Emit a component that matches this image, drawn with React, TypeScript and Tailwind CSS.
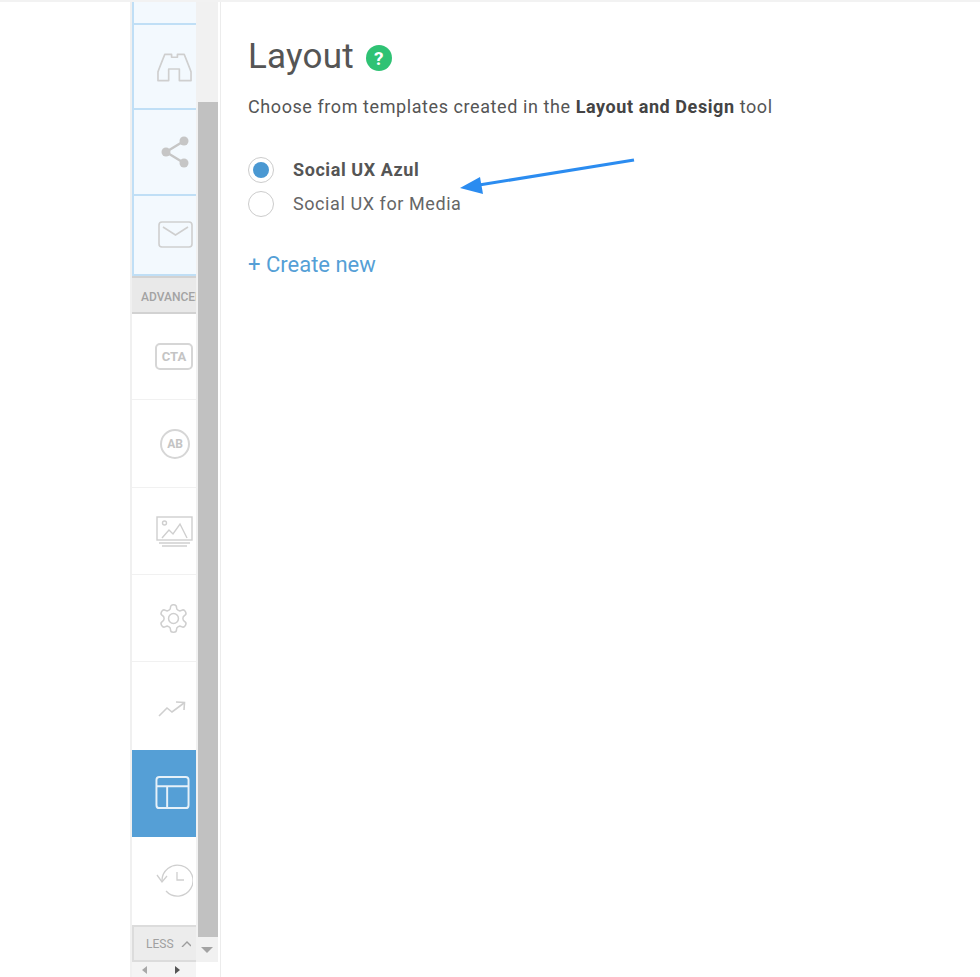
const iconCls = 'block fill-none stroke-[#cfcfcf]';

const Binoculars = () => (
  <svg width="35" height="31" viewBox="0 0 36 31" className={iconCls} strokeWidth="1.7" strokeLinejoin="round">
    <path d="M1 29 L1 20 Q2 17 8 2 L15 2 L15 5 L21 5 L21 2 L28 2 Q34 17 35 20 L35 29 L23 29 L23 17 L12 17 L12 29 Z" />
  </svg>
);

const Share = () => (
  <svg width="28" height="32" viewBox="0 0 28 32">
    <path d="M5 16 L23 5 M5 16 L23 27" stroke="#c6c6c6" strokeWidth="2.5" />
    <circle cx="5" cy="16" r="4.5" fill="#c6c6c6" />
    <circle cx="23" cy="5" r="4.5" fill="#c6c6c6" />
    <circle cx="23" cy="27" r="4.5" fill="#c6c6c6" />
  </svg>
);

const Mail = () => (
  <svg width="35" height="27" viewBox="0 0 35 27" className={iconCls} strokeWidth="1.6">
    <rect x="1" y="1" width="33" height="25" rx="3" />
    <path d="M5 6 L17.5 14 L30 6" />
  </svg>
);

const Picture = () => (
  <svg width="37" height="32" viewBox="0 0 37 32" className={iconCls} strokeWidth="1.4">
    <rect x="1" y="1" width="35" height="23" />
    <circle cx="8.5" cy="7" r="2" />
    <path d="M6 22 L13 14 L17 18 L24 8 L31 22" />
    <path d="M3 27 L34 27 M6 30 L31 30" />
  </svg>
);

const Gear = () => (
  <svg width="33" height="33" viewBox="0 0 24 24" className={iconCls} strokeWidth="1.1" strokeLinejoin="round">
    <path d="M12.22 2h-.44a2 2 0 0 0-2 2v.18a2 2 0 0 1-1 1.73l-.43.25a2 2 0 0 1-2 0l-.15-.08a2 2 0 0 0-2.73.73l-.22.38a2 2 0 0 0 .73 2.73l.15.1a2 2 0 0 1 1 1.72v.51a2 2 0 0 1-1 1.74l-.15.09a2 2 0 0 0-.73 2.73l.22.38a2 2 0 0 0 2.73.73l.15-.08a2 2 0 0 1 2 0l.43.25a2 2 0 0 1 1 1.73V20a2 2 0 0 0 2 2h.44a2 2 0 0 0 2-2v-.18a2 2 0 0 1 1-1.73l.43-.25a2 2 0 0 1 2 0l.15.08a2 2 0 0 0 2.73-.73l.22-.39a2 2 0 0 0-.73-2.73l-.15-.08a2 2 0 0 1-1-1.74v-.5a2 2 0 0 1 1-1.74l.15-.09a2 2 0 0 0 .73-2.73l-.22-.38a2 2 0 0 0-2.73-.73l-.15.08a2 2 0 0 1-2 0l-.43-.25a2 2 0 0 1-1-1.73V4a2 2 0 0 0-2-2z" />
    <circle cx="12" cy="12" r="3.6" />
  </svg>
);

const Trend = () => (
  <svg width="28" height="16" viewBox="0 0 28 16" className={iconCls} strokeWidth="1.6">
    <path d="M1 15 L9 7 L14 11 L26 2" />
    <path d="M18 1 L26.5 1.5 L26 9" />
  </svg>
);

const LayoutIcon = () => (
  <svg width="35" height="35" viewBox="0 0 36 35" className="block fill-none stroke-[#e6f1f9]" strokeWidth="2">
    <rect x="1.5" y="1.5" width="33" height="32" rx="3" />
    <path d="M1.5 11 L34.5 11 M12.5 11 L12.5 33.5" />
  </svg>
);

const History = () => (
  <svg width="37" height="34" viewBox="0 0 37 34" className={iconCls} strokeWidth="1.3">
    <path d="M6 17 A15.5 15.5 0 1 1 10 27" />
    <path d="M1 11 L6 18 L11 12" />
    <path d="M21 8 L21 16 L28 16" />
  </svg>
);

const BlueRow = ({ h, children }: { h: string; children: React.ReactNode }) => (
  <div className={`${h} flex items-center justify-end pr-[2px] border-b-2 border-[#c0dff6]`}>{children}</div>
);

const WhiteRow = ({ h, children, line = true }: { h: string; children: React.ReactNode; line?: boolean }) => (
  <div className={`${h} flex items-center justify-end pr-[3px] ${line ? 'border-b border-[#f1f1f1]' : ''}`}>{children}</div>
);

const App = () => {
  return (
    <div className="relative w-[980px] h-[977px] overflow-hidden bg-white flex font-['Roboto',sans-serif]">
      <div className="w-[130px] shrink-0" />

      {/* left menu */}
      <div className="w-[66px] shrink-0 border-l-2 border-[#f0f0f0] flex flex-col overflow-hidden">
        <div className="bg-[#f3f9fe] border-l-2 border-[#c0dff6]">
          <div className="h-[25px] border-b-2 border-[#c0dff6]" />
          <BlueRow h="h-[85px]"><div className="pr-[2px] mt-[2px]"><Binoculars /></div></BlueRow>
          <BlueRow h="h-[86px]"><div className="pr-[5px]"><Share /></div></BlueRow>
          <BlueRow h="h-[80px]"><div className="pr-[1px] mb-[2px]"><Mail /></div></BlueRow>
        </div>
        <div className="h-[38px] shrink-0 bg-[#e9e9e9] border-y-2 border-[#d2d2d2] flex items-center pl-[9px] pt-[3px] overflow-hidden">
          <span className="text-[12px] font-medium text-[#a3a3a3] whitespace-nowrap">ADVANCED</span>
        </div>
        <WhiteRow h="h-[86px]">
          <div className="w-[38px] h-[27px] border-2 border-[#d6d6d6] rounded-[5px] flex items-center justify-center text-[13px] font-bold text-[#c4c4c4]">CTA</div>
        </WhiteRow>
        <WhiteRow h="h-[88px]">
          <div className="w-[30px] h-[30px] mr-[3px] border-2 border-[#d6d6d6] rounded-full flex items-center justify-center text-[12px] font-bold text-[#c4c4c4]">AB</div>
        </WhiteRow>
        <WhiteRow h="h-[87px]"><div className="mt-[1px]"><Picture /></div></WhiteRow>
        <WhiteRow h="h-[87px]"><div className="mr-[3px]"><Gear /></div></WhiteRow>
        <WhiteRow h="h-[88px]" line={false}><div className="mr-[7px] mt-[6px]"><Trend /></div></WhiteRow>
        <div className="h-[87px] shrink-0 bg-[#559fd6] flex items-center justify-end pr-[6px]">
          <div className="mb-[3px]"><LayoutIcon /></div>
        </div>
        <WhiteRow h="h-[88px]" line={false}><History /></WhiteRow>
        <div className="h-[37px] shrink-0 bg-[#ececec] border-2 border-r-0 border-[#dcdcdc] flex items-center pl-[12px] pt-[1px] gap-[7px] overflow-hidden">
          <span className="text-[12px] text-[#a0a0a0] whitespace-nowrap">LESS</span>
          <svg width="10" height="6" viewBox="0 0 10 6" className="shrink-0 fill-none stroke-[#9c9c9c]" strokeWidth="1.4"><path d="M1 6 L6 1 L10 5" /></svg>
        </div>
        <div className="flex-1 bg-[#f4f4f4] flex items-center pl-[10px] gap-[28px]">
          <svg width="5" height="8" viewBox="0 0 5 8" fill="#a8a8a8"><path d="M5 0 L0 4 L5 8 Z" /></svg>
          <svg width="5" height="8" viewBox="0 0 5 8" fill="#555"><path d="M0 0 L5 4 L0 8 Z" /></svg>
        </div>
      </div>

      {/* scrollbar */}
      <div className="w-[25px] shrink-0 border-r border-[#ececec] pr-[2px]">
        <div className="h-[962px] bg-[#f1f1f1] flex flex-col">
          <div className="h-[102px]" />
          <div className="h-[835px] ml-[2px] bg-[#c1c1c1]" />
          <div className="flex-1 flex items-center justify-center">
            <svg width="12" height="6" viewBox="0 0 12 6" fill="#a3a3a3"><path d="M0 0 L12 0 L6 6 Z" /></svg>
          </div>
        </div>
      </div>

      {/* main */}
      <div className="flex-1 pl-[27px] pt-[34px]">
        <div className="flex items-center gap-[12px] h-[46px]">
          <h1 className="text-[35px] leading-[46px] tracking-[0.2px] text-[#555555]">Layout</h1>
          <div className="w-[26px] h-[26px] mt-[2px] rounded-full bg-[#2fc274] flex items-center justify-center text-white text-[19px] font-bold leading-none">?</div>
        </div>
        <p className="mt-[15px] text-[18px] leading-[24px] tracking-[0.58px] text-[#555555]">
          Choose from templates created in the <b className="font-bold text-[#444444]">Layout and Design</b> tool
        </p>
        <div className="mt-[34px] flex flex-col">
          <div className="flex items-center h-[34px] gap-[19px]">
            <div className="w-[26px] h-[26px] rounded-full border border-[#cccccc] flex items-center justify-center">
              <div className="w-[16px] h-[16px] rounded-full bg-[#4a98d2]" />
            </div>
            <span className="pb-[2px] text-[18px] font-bold tracking-[0.58px] text-[#555555]">Social UX Azul</span>
          </div>
          <div className="flex items-center h-[34px] gap-[19px]">
            <div className="w-[26px] h-[26px] rounded-full border border-[#cccccc]" />
            <span className="pb-[2px] text-[18px] tracking-[0.58px] text-[#666666]">Social UX for Media</span>
          </div>
        </div>
        <div className="mt-[30px] text-[22px] leading-[28px] text-[#559fd6]">+ Create new</div>
      </div>

      {/* annotation arrow */}
      <svg width="180" height="42" viewBox="0 0 180 42" className="absolute left-[459px] top-[155px]">
        <path d="M175 5 L20 30" stroke="#2b8cf0" strokeWidth="3.2" fill="none" />
        <path d="M1 33 L21 22 L24 39 Z" fill="#2b8cf0" />
      </svg>

      {/* top shadow */}
      <div className="absolute left-0 top-0 w-full h-[2px] bg-[#f2f2f2]" />
    </div>
  );
};

export default App;
